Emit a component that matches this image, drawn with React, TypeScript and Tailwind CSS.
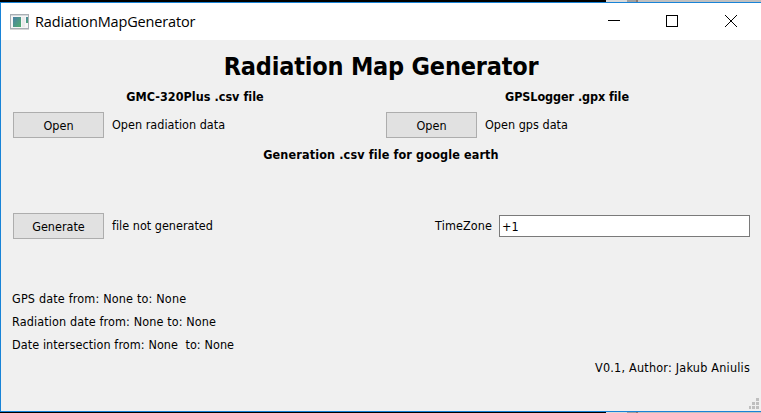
import type { ReactNode } from "react";

function PushButton({ children }: { children: ReactNode }) {
  return (
    <button className="h-[26px] w-[91px] shrink-0 border border-[#adadad] bg-[#e1e1e1] text-center leading-[25px] tracking-[0px]">
      {children}
    </button>
  );
}

function DesktopStrip({ className }: { className: string }) {
  return (
    <div className={`flex w-full shrink-0 bg-[#c0c0c0] ${className}`}>
      <div className="w-[606px] bg-black" />
      <div className="w-[21px] bg-[#d9d9d9]" />
      <div className="w-[9px] bg-[#a0a0a0]" />
      <div className="w-[2px] bg-[#8c7a70]" />
    </div>
  );
}

function AppIcon() {
  return (
    <svg width="20" height="16" viewBox="0 0 20 16" shapeRendering="crispEdges">
      <defs>
        <linearGradient id="pane" x1="0" y1="0" x2="1" y2="1">
          <stop offset="0" stopColor="#4b7fa6" />
          <stop offset="1" stopColor="#4fae6c" />
        </linearGradient>
      </defs>
      <rect x="0.5" y="0.5" width="18" height="14" fill="#f6f6f6" stroke="#a9afb4" />
      <rect x="1" y="1" width="17" height="1" fill="#d5d9dc" />
      <rect x="3" y="3" width="8" height="10" fill="url(#pane)" />
      <rect x="12" y="3" width="3" height="10" fill="#ebebeb" />
      <rect x="16" y="3" width="2" height="6" fill="url(#pane)" />
      <rect x="0" y="15" width="19" height="1" fill="#d6d6d6" />
    </svg>
  );
}

function TitleBar() {
  return (
    <header className="flex h-[37px] shrink-0 items-center bg-white pl-[9px] font-['Open_Sans','Noto_Sans',sans-serif] text-[14.5px]">
      <AppIcon />
      <span className="ml-[5px] flex-1 tracking-[-0.15px]">RadiationMapGenerator</span>
      <svg width="168" height="37" viewBox="0 0 168 37" fill="none" stroke="#000">
        <path d="M15 17.5h12" shapeRendering="crispEdges" />
        <rect x="73.5" y="12.5" width="11" height="11" shapeRendering="crispEdges" />
        <path d="M132 12l12 12m0-12l-12 12" />
      </svg>
    </header>
  );
}

function SizeGrip() {
  return (
    <svg width="11" height="11" viewBox="0 0 11 11" fill="#bfbfbf" shapeRendering="crispEdges">
      <path d="M8 0h3v3h-3zM4 4h3v3h-3zM8 4h3v3h-3zM1 8h2v3h-2zM4 8h3v3h-3zM8 8h3v3h-3z" />
    </svg>
  );
}

export default function App() {
  return (
    <div className="flex h-[413px] w-[761px] flex-col overflow-hidden text-black">
      <DesktopStrip className="h-[2px]" />
      <div className="flex h-[410px] shrink-0 flex-col border-y border-l border-[#1883d7] bg-[#f0f0f0]">
        <TitleBar />
        <main className="flex flex-1 flex-col pr-[11px] pl-[11px] font-['DejaVu_Sans_Condensed','DejaVu_Sans',sans-serif] text-[12.5px] leading-[16px] font-stretch-condensed">
          <h1 className="mt-[10px] h-[34px] text-center text-[25px] leading-[34px] font-bold tracking-[-0.2px]">
            Radiation Map Generator
          </h1>
          <div className="mt-[5px] grid h-[16px] grid-cols-[366px_373px] text-center font-bold">
            <h2 className="tracking-[0.03px]">GMC-320Plus .csv file</h2>
            <h2 className="pl-[5px] tracking-[-0.08px]">GPSLogger .gpx file</h2>
          </div>
          <div className="mt-[7px] grid h-[26px] grid-cols-[373px_1fr] pl-px tracking-[0.02px]">
            <div className="flex items-center gap-[8px]">
              <PushButton>Open</PushButton>
              <span>Open radiation data</span>
            </div>
            <div className="flex items-center gap-[8px]">
              <PushButton>Open</PushButton>
              <span>Open gps data</span>
            </div>
          </div>
          <h2 className="mt-[9px] h-[16px] text-center font-bold tracking-[0.13px]">
            Generation .csv file for google earth
          </h2>
          <div className="mt-[50px] flex h-[26px] items-center pl-px">
            <PushButton>Generate</PushButton>
            <span className="ml-[8px] flex-1 tracking-[0.01px]">file not generated</span>
            <label className="mr-[7px] tracking-[0.1px]" htmlFor="tz">TimeZone</label>
            <input
              id="tz"
              defaultValue="+1"
              className="h-[22px] w-[251px] border border-[#7a7a7a] bg-white px-[2px] outline-none"
            />
          </div>
          <div className="mt-[52px] flex flex-col gap-[7px] whitespace-pre">
            <p className="tracking-[0.17px]">GPS date from: None to: None</p>
            <p className="tracking-[0.12px]">Radiation date from: None to: None</p>
            <p className="tracking-[0.09px]">Date intersection from: None  to: None</p>
            <p className="text-right tracking-[0.22px]">V0.1, Author: Jakub Aniulis</p>
          </div>
        </main>
        <footer className="flex shrink-0 justify-end pr-[2px] pb-[2px]">
          <SizeGrip />
        </footer>
      </div>
      <DesktopStrip className="h-px" />
    </div>
  );
}
